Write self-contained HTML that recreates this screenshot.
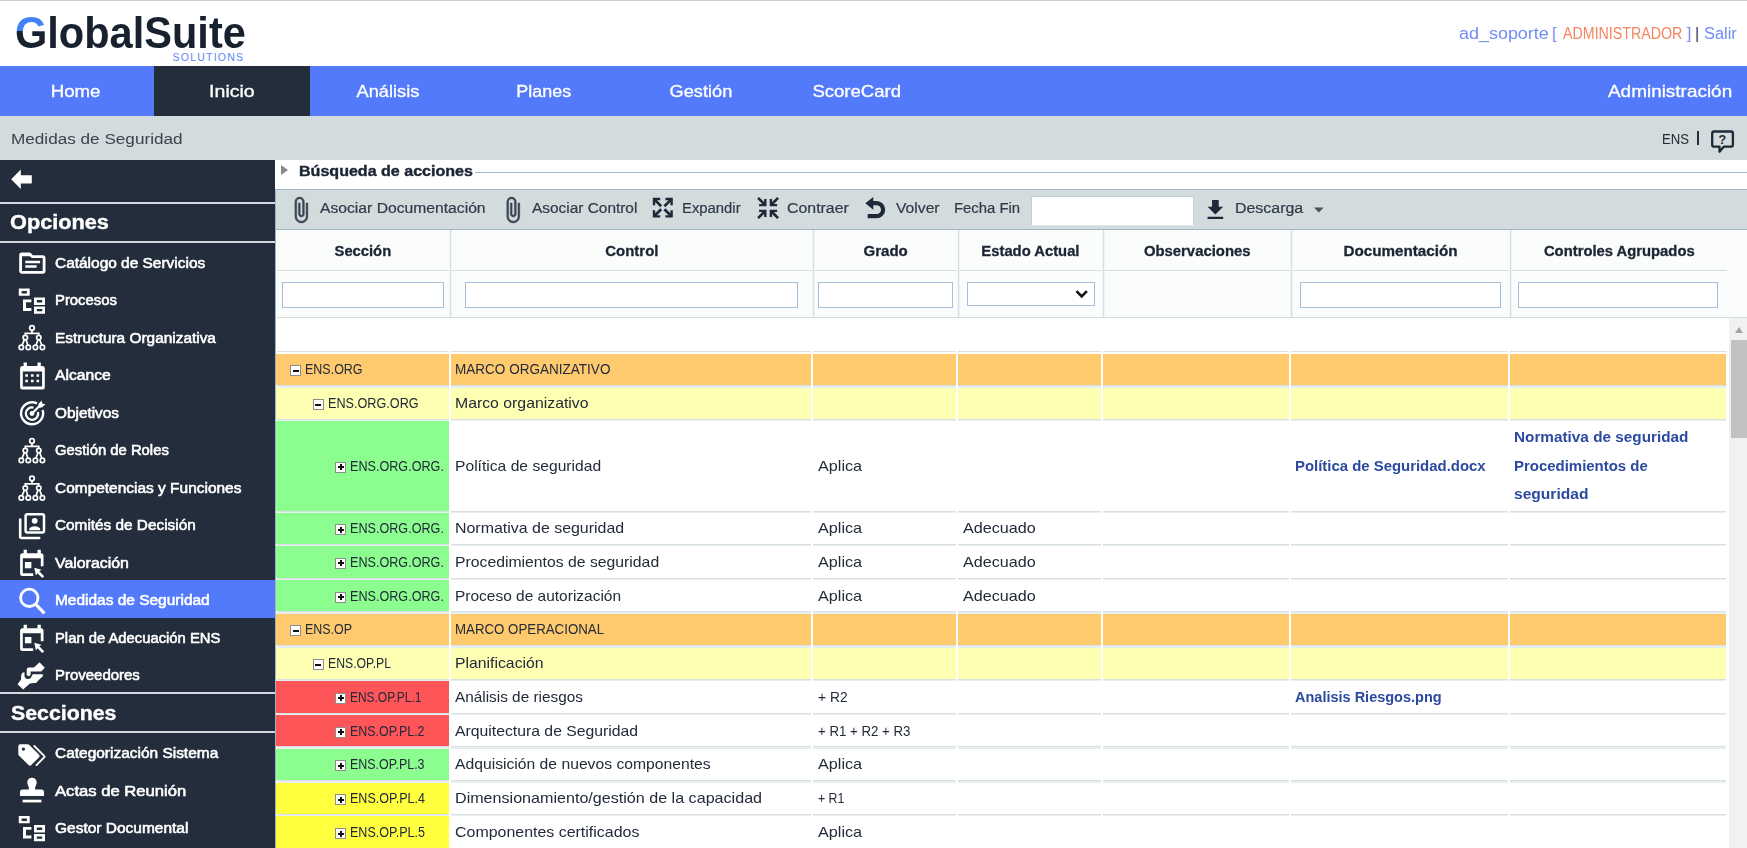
<!DOCTYPE html>
<html lang="es"><head>
<meta charset="utf-8">
<title>GlobalSuite - Medidas de Seguridad</title>
<style>
*{box-sizing:border-box;margin:0;padding:0}
html,body{width:1747px;height:848px;overflow:hidden;background:#fff}
body{position:relative;font-family:"Liberation Sans",sans-serif;color:#232b3a;font-size:14px}
.abs{position:absolute}
.t{position:absolute;white-space:nowrap;line-height:1}
#topline{left:0;top:0;width:1747px;height:1px;background:#cfcfcf}
#logo{left:14.5px;top:12px;font-size:43.5px;font-weight:bold;color:#18222f}
#logo .g{background:linear-gradient(180deg,#3f83f7 0,#3f83f7 46%,#18222f 46%);-webkit-background-clip:text;background-clip:text;color:transparent}
#sol{left:172.5px;top:51.5px;font-size:10.5px;color:#5b86f5}
.u{top:26px;font-size:15.800px;color:#708cf5}
.u.adm{color:#f3845f}
.u.bar{color:#3a3560}
#nav{left:0;top:66px;width:1747px;height:50px;background:#537afa}
#nav .tab{position:absolute;top:0;height:50px;width:156px;color:#fff;font-size:16.2px;text-align:center;line-height:51px;white-space:nowrap;-webkit-text-stroke:0.3px #fff}
#nav .act{background:#232d3b}
#crumb{left:0;top:116px;width:1747px;height:44px;background:#d3dcdd}
#side{left:0;top:160px;width:275px;height:688px;background:#232d3b;color:#fff}
#side .ln{position:absolute;left:0;width:275px;height:2px;background:#d5d8dc}
#side .h{position:absolute;left:10px;font-size:20px;font-weight:bold;line-height:1;white-space:nowrap;-webkit-text-stroke:0.4px #fff}
#side .it{position:absolute;left:0;width:275px;height:37px}
#side .it .tx{position:absolute;left:54.700px;top:11.800px;font-size:14px;line-height:1;white-space:nowrap;-webkit-text-stroke:0.55px #fff}
#side .it svg{position:absolute;left:18px;top:5px;width:28px;height:28px}
#side .sel{background:#537afa}
#side .sel .tx{top:12.800px}
#main{left:275px;top:160px;width:1472px;height:688px;background:#fff;overflow:hidden}

#main .tri{position:absolute;left:6px;top:5px;width:0;height:0;border-left:7px solid #8a8a8a;border-top:5px solid transparent;border-bottom:5px solid transparent}
#main .ttl{left:24px;top:3.500px;font-size:14.600px;font-weight:bold;color:#1c2534;-webkit-text-stroke:0.4px #1c2534}
#main .tln{left:200px;top:12px;width:1272px;height:1px;background:#a3b9d1}
#tb{left:0;top:29px;width:1472px;height:41px;background:#d3dcdd;border-top:1px solid #9cb3cc;border-bottom:1px solid #9cb3cc;border-left:1px solid #a9bed4}
#tb .lb{position:absolute;top:10.800px;font-size:14px;line-height:1;color:#303a48;white-space:nowrap;-webkit-text-stroke:0.2px #303a48}
#tb svg{position:absolute;overflow:visible}
#tb .inp{position:absolute;left:755px;top:6px;width:163px;height:30px;background:#fff;border:1px solid #c3d0dc;border-bottom-color:#dfe6ea}
#hd{left:2px;top:70px;width:1470px;height:88px;background:#fbfcfc}
#hd .hl{position:absolute;left:0;height:1px;background:#d5dddd}
#hd .vl{position:absolute;top:0;width:1px;height:87px;background:#d7dfdf;box-shadow:1px 0 0 #f1f4f4,-1px 0 0 #f4f6f6}
#hd .th{position:absolute;top:14px;font-size:14px;-webkit-text-stroke:0.3px #1c2534;font-weight:bold;line-height:1;color:#1c2534;white-space:nowrap;text-align:center}
#hd .fi{position:absolute;top:52px;height:26px;background:#fff;border:1px solid #a6bddb}
#hd .fi.se{height:24px}
.row{position:absolute;left:2px;width:1449px}
.row .c{position:absolute;top:0;height:100%;overflow:hidden}
.row::after{content:"";position:absolute;left:0;right:0;top:100%;height:2.5px;background:linear-gradient(#d8e0e2 0,#d8e0e2 1px,#e9eef0 1px)}
.c1{left:-1px;width:173px}.c2{left:174px;width:360px}.c3{left:536px;width:143px}.c4{left:681px;width:143px}.c5{left:826px;width:186px}.c6{left:1014px;width:217px}.c7{left:1233px;width:216px}
.org .c{background:#ffc96e}.sub .c{background:#ffffb4}
.w .c{background:#fff}
.w .c2,.w .c3,.w .c4,.w .c5,.w .c6{border-right:0}
.cg{background:#8cfd8f !important}.cr{background:#fd5558 !important}.cy{background:#ffff3e !important}
.ct{position:absolute;left:3.8px;top:50%;margin-top:-8.100px;font-size:14.2px;line-height:16px;white-space:nowrap;color:#232b3a}
.lk{font-weight:bold;color:#2b4aa0 !important}
.l3{position:absolute;left:3.8px;font-size:14.5px;line-height:16px;white-space:nowrap}
.bx{position:absolute;top:50%;margin-top:-4.100px;width:11px;height:11px;background:#fff;border:1px solid #8e8e8e}
.bx::before{content:"";position:absolute;left:1.5px;top:3.5px;width:6px;height:2px;background:#111}
.bx.p::after{content:"";position:absolute;left:3.5px;top:1.5px;width:2px;height:6px;background:#111}
#sb{left:1454px;top:158px;width:18px;height:530px;background:#f1f1f1}
#sb .th{position:absolute;left:2px;top:22px;width:16px;height:98px;background:#c1c1c1}
#sb .up{position:absolute;left:5.5px;top:9px;width:0;height:0;border-bottom:6px solid #a3a3a3;border-left:4.5px solid transparent;border-right:4.5px solid transparent}
.c3 .ct,.c4 .ct{left:5.3px}
.vg{top:158px;width:2px;height:530px;background:#fff;z-index:3}
</style>
</head>
<body>
<div class="abs" id="topline"></div>
<div class="t" id="logo" style="transform: scaleX(0.955); transform-origin: 0px 50%;"><span class="g">G</span>lobalSuite</div>
<div class="t" id="sol" style="letter-spacing: 1.23px;">SOLUTIONS</div>
<div class="t u" style="left: 1458.8px; transform: scaleX(1.136); transform-origin: 0px 50%;">ad_soporte</div>
<div class="t u" style="left:1552px">[</div>
<div class="t u adm" style="left: 1562.5px; transform: scaleX(0.901); transform-origin: 0px 50%;">ADMINISTRADOR</div>
<div class="t u" style="left:1686.8px">]</div>
<div class="t u bar" style="left:1695px">|</div>
<div class="t u" style="left: 1704px; transform: scaleX(1.038); transform-origin: 0px 50%;">Salir</div>
<div class="abs" id="nav">
 <div class="tab" style="left:-2px"><span style="display: inline-block; transform: scaleX(1.153); transform-origin: 50% 50%;">Home</span></div>
 <div class="tab act" style="left:154px;width:156px"><span style="display: inline-block; transform: scaleX(1.206); transform-origin: 50% 50%;">Inicio</span></div>
 <div class="tab" style="left:310px"><span style="display: inline-block; transform: scaleX(1.126); transform-origin: 50% 50%;">Análisis</span></div>
 <div class="tab" style="left:466px"><span style="display: inline-block; transform: scaleX(1.107); transform-origin: 50% 50%;">Planes</span></div>
 <div class="tab" style="left:623px"><span style="display: inline-block; transform: scaleX(1.126); transform-origin: 50% 50%;">Gestión</span></div>
 <div class="tab" style="left:779px"><span style="display: inline-block; transform: scaleX(1.144); transform-origin: 50% 50%;">ScoreCard</span></div>
 <div class="tab" style="left:1592px"><span style="display: inline-block; transform: scaleX(1.17); transform-origin: 50% 50%;">Administración</span></div>
</div>
<div class="abs" id="crumb">
 <div class="t" style="left: 11px; top: 15px; font-size: 15.5px; color: rgb(58, 67, 80); transform: scaleX(1.106); transform-origin: 0px 50%;">Medidas de Seguridad</div>
 <div class="t" style="left: 1661.7px; top: 15px; font-size: 15.5px; transform: scaleX(0.85); transform-origin: 0px 50%;">ENS</div>
 <div class="abs" style="left:1697px;top:15px;width:2px;height:14px;background:#232d3b"></div>
<svg class="abs" style="left:1708px;top:11px;width:30px;height:32px" viewBox="1708 127 30 32" fill="none"><path stroke="#1e2838" stroke-width="2.300" stroke-linejoin="round" d="M1714.200 131.500h16.700a2 2 0 0 1 2 2v11.200a2 2 0 0 1-2 2h-7.200l-4.200 5v-5h-5.300a2 2 0 0 1-2-2v-11.200a2 2 0 0 1 2-2z"></path></svg>
 <div class="t" style="left:1718.500px;top:17.500px;font-size:12.500px;font-weight:bold;color:#1e2838">?</div>
</div>
<div class="abs" id="side">
 <div class="ln" style="top:42px"></div>
 <div class="h" style="top: 52px; transform: scaleX(1.085); transform-origin: 0px 50%;">Opciones</div>
 <div class="ln" style="top:81px"></div>
 <div class="it" style="top:84px"><span class="tx" style="transform: scaleX(1.103); transform-origin: 0px 50%;">Catálogo de Servicios</span></div>
 <div class="it" style="top:121px"><span class="tx" style="transform: scaleX(1.061); transform-origin: 0px 50%;">Procesos</span></div>
 <div class="it" style="top:159px"><span class="tx" style="transform: scaleX(1.1); transform-origin: 0px 50%;">Estructura Organizativa</span></div>
 <div class="it" style="top:196px"><span class="tx" style="transform: scaleX(1.118); transform-origin: 0px 50%;">Alcance</span></div>
 <div class="it" style="top:234px"><span class="tx" style="transform: scaleX(1.097); transform-origin: 0px 50%;">Objetivos</span></div>
 <div class="it" style="top:271px"><span class="tx" style="transform: scaleX(1.06); transform-origin: 0px 50%;">Gestión de Roles</span></div>
 <div class="it" style="top:309px"><span class="tx" style="transform: scaleX(1.104); transform-origin: 0px 50%;">Competencias y Funciones</span></div>
 <div class="it" style="top:346px"><span class="tx" style="transform: scaleX(1.096); transform-origin: 0px 50%;">Comités de Decisión</span></div>
 <div class="it" style="top:384px"><span class="tx" style="transform: scaleX(1.135); transform-origin: 0px 50%;">Valoración</span></div>
 <div class="it sel" style="top:420px;height:38px"><span class="tx" style="transform: scaleX(1.104); transform-origin: 0px 50%;">Medidas de Seguridad</span></div>
 <div class="it" style="top:459px"><span class="tx" style="transform: scaleX(1.057); transform-origin: 0px 50%;">Plan de Adecuación ENS</span></div>
 <div class="it" style="top:496px"><span class="tx" style="transform: scaleX(1.069); transform-origin: 0px 50%;">Proveedores</span></div>
 <div class="ln" style="top:532px"></div>
 <div class="h" style="top: 543px; left: 10.8px; transform: scaleX(1.065); transform-origin: 0px 50%;">Secciones</div>
 <div class="ln" style="top:571px"></div>
 <div class="it" style="top:574px"><span class="tx" style="transform: scaleX(1.104); transform-origin: 0px 50%;">Categorización Sistema</span></div>
 <div class="it" style="top:612px"><span class="tx" style="transform: scaleX(1.188); transform-origin: 0px 50%;">Actas de Reunión</span></div>
 <div class="it" style="top:649px"><span class="tx" style="transform: scaleX(1.106); transform-origin: 0px 50%;">Gestor Documental</span></div>
<svg class="abs" id="sico" style="left:0;top:0;width:275px;height:688px" viewBox="0 160 275 688" fill="none" stroke="none">
<defs>
 <g id="i-tree" fill="#fff">
  <path fill-rule="evenodd" d="M18.8 288.5h10.9v7.3H18.8zM21.6 291h5.3v2.4h-5.3z"></path>
  <path fill-rule="evenodd" d="M34 297.5h11v7.4H34zM36.8 300h5.4v2.4h-5.4z"></path>
  <path fill-rule="evenodd" d="M34 306.5h11v7.2H34zM36.8 309h5.4v2.2h-5.4z"></path>
  <path d="M23 299.4h8.4v2.8h-5.4v5.9h5.4v3H23z"></path>
 </g>
 <g id="i-org" stroke="#fff" stroke-width="1.7" fill="none">
  <circle cx="32" cy="328" r="2.3"></circle>
  <circle cx="25.3" cy="337.6" r="2.2"></circle><circle cx="38.8" cy="337.6" r="2.2"></circle>
  <circle cx="21.3" cy="347.4" r="2.2"></circle><circle cx="28.3" cy="347.4" r="2.2"></circle><circle cx="35.4" cy="347.4" r="2.2"></circle><circle cx="42.4" cy="347.4" r="2.2"></circle>
  <path d="M32 330.3v3M25.3 335.4v-2.1h13.5v2.1M24.4 339.7l-2.4 5.6M26.2 339.7l1.6 5.6M37.9 339.7l-1.9 5.6M39.7 339.7l2.1 5.6"></path>
 </g>
 <g id="i-calcur" fill="#fff">
  <path d="M23.6 549.7h3.3v4h-3.3zM37.5 549.7h3.3v4h-3.3z"></path>
  <path d="M22.6 553.2h18.4a2.5 2.5 0 0 1 2.5 2.5v10.6h-2.7v-8H22.8v15h10.4v2.7H22.6a2.5 2.5 0 0 1-2.5-2.5v-17.8a2.5 2.5 0 0 1 2.5-2.5z"></path>
  <path d="M24.9 562h6.5v6.3h-6.5z"></path>
  <path d="M34.3 567.8l7.2 1.9-2.2 1.6 4.9 4.9-1.9 1.9-4.9-4.9-1.5 2.3z"></path>
 </g>
</defs>
<!-- back arrow -->
<path fill="#fff" d="M11.2 179.3l9.6-9.7v5.6h11v8.2h-11v5.6z"></path>
<!-- folder -->
<path stroke="#fff" stroke-width="2.8" stroke-linejoin="round" d="M20.6 255.2a1.2 1.2 0 0 1 1.2-1.2h8l2.4 2.6h10.6a1.3 1.3 0 0 1 1.3 1.3v13.1a1.3 1.3 0 0 1-1.3 1.3H21.9a1.3 1.3 0 0 1-1.3-1.3z"></path>
<path fill="#fff" d="M20 253.4h10.6l2 2.8H20z"></path>
<path stroke="#fff" stroke-width="2.3" d="M25.3 262h14.8M25.3 266.500h11.300"></path>
<!-- procesos -->
<use href="#i-tree"></use>
<!-- estructura -->
<use href="#i-org"></use>
<!-- alcance: calendar -->
<g fill="#fff">
 <path d="M23.6 362.5h3.3v4.4h-3.3zM37.5 362.5h3.3v4.4h-3.3z"></path>
 <path fill-rule="evenodd" d="M22.6 366h19.7a2.5 2.5 0 0 1 2.5 2.5v18.4a2.5 2.5 0 0 1-2.5 2.5H22.6a2.5 2.5 0 0 1-2.5-2.5v-18.4a2.5 2.5 0 0 1 2.5-2.5zM22.8 371.4v15.2h19.3v-15.2z"></path>
 <path d="M25.3 374.2h2.6v2.6h-2.6zM31 374.2h2.6v2.6H31zM36.5 374.2h2.6v2.6h-2.6zM25.3 379.7h2.6v2.6h-2.6zM31 379.7h2.6v2.6H31zM36.5 379.7h2.6v2.6h-2.6z"></path>
</g>
<!-- objetivos: target -->
<g stroke="#fff" fill="none">
 <path stroke-width="2.4" d="M37 403.4A11 11 0 1 0 42.6 410"></path>
 <path stroke-width="2.3" d="M33.5 407.6A6.2 6.2 0 1 0 38 412"></path>
 <circle cx="32" cy="413.5" r="2.4" fill="#fff" stroke="none"></circle>
 <path stroke-width="2.2" d="M32 413.5l8.5-8.5"></path>
 <path fill="#fff" stroke="none" d="M38.3 404l3.4-3.6.6 3.2 3.2.6-3.6 3.4-3 .1z"></path>
</g>
<!-- gestion de roles -->
<use href="#i-org" y="113"></use>
<!-- competencias -->
<use href="#i-org" y="150.5"></use>
<!-- comites -->
<g>
 <rect x="25.6" y="514.2" width="18.4" height="18.4" rx="1.8" stroke="#fff" stroke-width="2.5"></rect>
 <circle cx="34.7" cy="520.8" r="2.9" fill="#fff"></circle>
 <path fill="#fff" d="M29.2 530.3v-1c0-2 3.6-3 5.5-3s5.5 1 5.5 3v1z"></path>
 <path stroke="#fff" stroke-width="2.6" stroke-linecap="round" stroke-linejoin="round" d="M20.2 519.5v17a1.5 1.5 0 0 0 1.5 1.5h17.5"></path>
</g>
<!-- valoracion -->
<use href="#i-calcur"></use>
<!-- medidas: magnifier -->
<circle cx="29.3" cy="597.8" r="8.7" stroke="#fff" stroke-width="2.8"></circle>
<path stroke="#fff" stroke-width="3.2" d="M35.6 604.2l8.8 9.2"></path>
<!-- plan -->
<use href="#i-calcur" y="75"></use>
<!-- proveedores: handshake -->
<g fill="#fff">
 <path d="M39.500 662.200L44.800 667.800L41.200 671.600H30.600V675Q28.700 677.300 26.700 675V669.500Q26.800 667.500 28.800 667.500H34Z"></path>
 <path d="M17.600 684.300L21 679.600L21.200 675Q21.600 672.700 24.400 672L24.600 676.700Q26 679.600 28.600 679Q31 678.500 31.500 676.500L32.700 674.300H42.900V676.300L40.300 678.400L37.800 680.900L36.500 682.800L29.900 683.500L23.100 689.600Z"></path>
</g>
<!-- categorizacion: tags -->
<g>
 <path fill="#fff" fill-rule="evenodd" d="M18.300 746.200a2 2 0 0 1 2-2h7.400a2 2 0 0 1 1.400.6l9.800 9.800a2 2 0 0 1 0 2.800l-7.600 7.600a2 2 0 0 1-2.800 0l-9.600-9.600a2 2 0 0 1-.6-1.400zM23.400 747.400a1.700 1.700 0 1 0 0 3.400 1.700 1.700 0 0 0 0-3.400z"></path>
 <path stroke="#fff" stroke-width="1.900" stroke-linecap="round" stroke-linejoin="round" d="M34.300 746l9.600 9.600a1.500 1.500 0 0 1 0 2.100l-7.400 7.400"></path>
</g>
<!-- actas: stamp -->
<g fill="#fff">
 <path d="M32 777.800c2.700 0 4.700 2 4.700 4.600 0 1.500-.6 2.700-1.200 4-.5 1-.5 2.200-.1 3.200h6.100c1.500 0 2.500 1 2.500 2.500v4H20v-4c0-1.500 1-2.500 2.500-2.500h6.100c.4-1 .4-2.200-.1-3.200-.6-1.300-1.200-2.500-1.200-4 0-2.600 2-4.600 4.700-4.600z"></path>
 <path d="M22.600 799.700h18.800v2.700H22.600z"></path>
</g>
<!-- gestor documental -->
<use href="#i-tree" y="527.5"></use>
</svg>
</div>
<div class="abs" id="main">
 <div class="tri"></div>
 <div class="t ttl" style="transform: scaleX(1.1); transform-origin: 0px 50%;">Búsqueda de acciones</div>
 <div class="abs tln"></div>
 <div class="abs" id="tb">
  <span class="lb" style="left: 43.5px; transform: scaleX(1.12); transform-origin: 0px 50%;">Asociar Documentación</span>
  <span class="lb" style="left: 255.5px; transform: scaleX(1.101); transform-origin: 0px 50%;">Asociar Control</span>
  <span class="lb" style="left: 406.4px; transform: scaleX(1.06); transform-origin: 0px 50%;">Expandir</span>
  <span class="lb" style="left: 511px; transform: scaleX(1.135); transform-origin: 0px 50%;">Contraer</span>
  <span class="lb" style="left: 619.8px; transform: scaleX(1.12); transform-origin: 0px 50%;">Volver</span>
  <span class="lb" style="left: 678.4px; transform: scaleX(1.062); transform-origin: 0px 50%;">Fecha Fin</span>
  <div class="inp"></div>
  <span class="lb" style="left: 958.6px; transform: scaleX(1.138); transform-origin: 0px 50%;">Descarga</span>
 </div>
 <div class="abs" id="hd">
  <div class="hl" style="top:40px;width:1450px"></div>
  <div class="hl" style="top:87px;width:1470px"></div>
  <div class="vl" style="left:173px"></div><div class="vl" style="left:536px"></div><div class="vl" style="left:681px"></div><div class="vl" style="left:826px"></div><div class="vl" style="left:1014px"></div><div class="vl" style="left:1233px"></div>
  <div class="th" style="left:0;width:172px"><span style="display: inline-block; transform: scaleX(1.054); transform-origin: 50% 50%;">Sección</span></div>
  <div class="th" style="left:174px;width:361px"><span style="display: inline-block; transform: scaleX(1.067); transform-origin: 50% 50%;">Control</span></div>
  <div class="th" style="left:537px;width:143px"><span style="display: inline-block; transform: scaleX(1.074); transform-origin: 50% 50%;">Grado</span></div>
  <div class="th" style="left:682px;width:143px"><span style="display: inline-block; transform: scaleX(1.057); transform-origin: 50% 50%;">Estado Actual</span></div>
  <div class="th" style="left:827px;width:186px"><span style="display: inline-block; transform: scaleX(1.062); transform-origin: 50% 50%;">Observaciones</span></div>
  <div class="th" style="left:1015px;width:217px"><span style="display: inline-block; transform: scaleX(1.088); transform-origin: 50% 50%;">Documentación</span></div>
  <div class="th" style="left:1234px;width:216px"><span style="display: inline-block; transform: scaleX(1.057); transform-origin: 50% 50%;">Controles Agrupados</span></div>
  <div class="fi" style="left:5px;width:162px"></div>
  <div class="fi" style="left:188px;width:333px"></div>
  <div class="fi" style="left:541px;width:135px"></div>
  <div class="fi se" style="left:689.5px;width:128px"></div>
  <div class="fi" style="left:1022.5px;width:201px"></div>
  <div class="fi" style="left:1241px;width:200px"></div>
 </div>
<div class="row org" style="top:193.75px;height:31.25px">
 <div class="c c1"><i class="bx m" style="left:14px"></i><span class="ct" style="left: 29.2px; transform: scaleX(0.88); transform-origin: 0px 50%;">ENS.ORG</span></div>
 <div class="c c2"><span class="ct" style="transform: scaleX(0.954); transform-origin: 0px 50%;">MARCO ORGANIZATIVO</span></div>
 <div class="c c3"></div>
 <div class="c c4"></div>
 <div class="c c5"></div>
 <div class="c c6"></div>
 <div class="c c7"></div>
</div>
<div class="row sub" style="top:227.5px;height:31.25px">
 <div class="c c1"><i class="bx m" style="left:36.5px"></i><span class="ct" style="left: 51.7px; transform: scaleX(0.891); transform-origin: 0px 50%;">ENS.ORG.ORG</span></div>
 <div class="c c2"><span class="ct" style="transform: scaleX(1.114); transform-origin: 0px 50%;">Marco organizativo</span></div>
 <div class="c c3"></div>
 <div class="c c4"></div>
 <div class="c c5"></div>
 <div class="c c6"></div>
 <div class="c c7"></div>
</div>
<div class="row w" style="top:261.25px;height:89.25px">
 <div class="c c1 cg"><i class="bx p" style="left:59px"></i><span class="ct" style="left: 74.2px; transform: scaleX(0.889); transform-origin: 0px 50%;">ENS.ORG.ORG.</span></div>
 <div class="c c2"><span class="ct" style="transform: scaleX(1.103); transform-origin: 0px 50%;">Política de seguridad</span></div>
 <div class="c c3"><span class="ct" style="transform: scaleX(1.141); transform-origin: 0px 50%;">Aplica</span></div>
 <div class="c c4"></div>
 <div class="c c5"></div>
 <div class="c c6"><a class="ct lk" style="transform: scaleX(1.051); transform-origin: 0px 50%;">Política de Seguridad.docx</a></div>
 <div class="c c7"><a class="lk l3" style="top: 7.5px; transform: scaleX(1.056); transform-origin: 0px 50%;">Normativa de seguridad</a><a class="lk l3" style="top: 36.3px; transform: scaleX(1.031); transform-origin: 0px 50%;">Procedimientos de</a><a class="lk l3" style="top: 65.1px; transform: scaleX(1.074); transform-origin: 0px 50%;">seguridad</a></div>
</div>
<div class="row w" style="top:352.5px;height:31.25px">
 <div class="c c1 cg"><i class="bx p" style="left:59px"></i><span class="ct" style="left: 74.2px; transform: scaleX(0.889); transform-origin: 0px 50%;">ENS.ORG.ORG.</span></div>
 <div class="c c2"><span class="ct" style="transform: scaleX(1.123); transform-origin: 0px 50%;">Normativa de seguridad</span></div>
 <div class="c c3"><span class="ct" style="transform: scaleX(1.141); transform-origin: 0px 50%;">Aplica</span></div>
 <div class="c c4"><span class="ct" style="transform: scaleX(1.139); transform-origin: 0px 50%;">Adecuado</span></div>
 <div class="c c5"></div>
 <div class="c c6"></div>
 <div class="c c7"></div>
</div>
<div class="row w" style="top:386.25px;height:31.25px">
 <div class="c c1 cg"><i class="bx p" style="left:59px"></i><span class="ct" style="left: 74.2px; transform: scaleX(0.889); transform-origin: 0px 50%;">ENS.ORG.ORG.</span></div>
 <div class="c c2"><span class="ct" style="transform: scaleX(1.111); transform-origin: 0px 50%;">Procedimientos de seguridad</span></div>
 <div class="c c3"><span class="ct" style="transform: scaleX(1.141); transform-origin: 0px 50%;">Aplica</span></div>
 <div class="c c4"><span class="ct" style="transform: scaleX(1.139); transform-origin: 0px 50%;">Adecuado</span></div>
 <div class="c c5"></div>
 <div class="c c6"></div>
 <div class="c c7"></div>
</div>
<div class="row w" style="top:420px;height:31.25px">
 <div class="c c1 cg"><i class="bx p" style="left:59px"></i><span class="ct" style="left: 74.2px; transform: scaleX(0.889); transform-origin: 0px 50%;">ENS.ORG.ORG.</span></div>
 <div class="c c2"><span class="ct" style="transform: scaleX(1.091); transform-origin: 0px 50%;">Proceso de autorización</span></div>
 <div class="c c3"><span class="ct" style="transform: scaleX(1.141); transform-origin: 0px 50%;">Aplica</span></div>
 <div class="c c4"><span class="ct" style="transform: scaleX(1.139); transform-origin: 0px 50%;">Adecuado</span></div>
 <div class="c c5"></div>
 <div class="c c6"></div>
 <div class="c c7"></div>
</div>
<div class="row org" style="top:453.75px;height:31.25px">
 <div class="c c1"><i class="bx m" style="left:14px"></i><span class="ct" style="left: 29.2px; transform: scaleX(0.878); transform-origin: 0px 50%;">ENS.OP</span></div>
 <div class="c c2"><span class="ct" style="transform: scaleX(0.936); transform-origin: 0px 50%;">MARCO OPERACIONAL</span></div>
 <div class="c c3"></div>
 <div class="c c4"></div>
 <div class="c c5"></div>
 <div class="c c6"></div>
 <div class="c c7"></div>
</div>
<div class="row sub" style="top:487.5px;height:31.25px">
 <div class="c c1"><i class="bx m" style="left:36.5px"></i><span class="ct" style="left: 51.7px; transform: scaleX(0.863); transform-origin: 0px 50%;">ENS.OP.PL</span></div>
 <div class="c c2"><span class="ct" style="transform: scaleX(1.112); transform-origin: 0px 50%;">Planificación</span></div>
 <div class="c c3"></div>
 <div class="c c4"></div>
 <div class="c c5"></div>
 <div class="c c6"></div>
 <div class="c c7"></div>
</div>
<div class="row w" style="top:521.25px;height:31.25px">
 <div class="c c1 cr"><i class="bx p" style="left:59px"></i><span class="ct" style="left: 74.2px; transform: scaleX(0.841); transform-origin: 0px 50%;">ENS.OP.PL.1</span></div>
 <div class="c c2"><span class="ct" style="transform: scaleX(1.081); transform-origin: 0px 50%;">Análisis de riesgos</span></div>
 <div class="c c3"><span class="ct" style="transform: scaleX(0.974); transform-origin: 0px 50%;">+ R2</span></div>
 <div class="c c4"></div>
 <div class="c c5"></div>
 <div class="c c6"><a class="ct lk" style="transform: scaleX(1.022); transform-origin: 0px 50%;">Analisis Riesgos.png</a></div>
 <div class="c c7"></div>
</div>
<div class="row w" style="top:555px;height:31.25px">
 <div class="c c1 cr"><i class="bx p" style="left:59px"></i><span class="ct" style="left: 74.2px; transform: scaleX(0.878); transform-origin: 0px 50%;">ENS.OP.PL.2</span></div>
 <div class="c c2"><span class="ct" style="transform: scaleX(1.111); transform-origin: 0px 50%;">Arquitectura de Seguridad</span></div>
 <div class="c c3"><span class="ct" style="transform: scaleX(0.933); transform-origin: 0px 50%;">+ R1 + R2 + R3</span></div>
 <div class="c c4"></div>
 <div class="c c5"></div>
 <div class="c c6"></div>
 <div class="c c7"></div>
</div>
<div class="row w" style="top:588.75px;height:31.25px">
 <div class="c c1 cg"><i class="bx p" style="left:59px"></i><span class="ct" style="left: 74.2px; transform: scaleX(0.878); transform-origin: 0px 50%;">ENS.OP.PL.3</span></div>
 <div class="c c2"><span class="ct" style="transform: scaleX(1.106); transform-origin: 0px 50%;">Adquisición de nuevos componentes</span></div>
 <div class="c c3"><span class="ct" style="transform: scaleX(1.141); transform-origin: 0px 50%;">Aplica</span></div>
 <div class="c c4"></div>
 <div class="c c5"></div>
 <div class="c c6"></div>
 <div class="c c7"></div>
</div>
<div class="row w" style="top:622.5px;height:31.25px">
 <div class="c c1 cy"><i class="bx p" style="left:59px"></i><span class="ct" style="left: 74.2px; transform: scaleX(0.884); transform-origin: 0px 50%;">ENS.OP.PL.4</span></div>
 <div class="c c2"><span class="ct" style="transform: scaleX(1.135); transform-origin: 0px 50%;">Dimensionamiento/gestión de la capacidad</span></div>
 <div class="c c3"><span class="ct" style="transform: scaleX(0.866); transform-origin: 0px 50%;">+ R1</span></div>
 <div class="c c4"></div>
 <div class="c c5"></div>
 <div class="c c6"></div>
 <div class="c c7"></div>
</div>
<div class="row w" style="top:656.25px;height:31.75px">
 <div class="c c1 cy"><i class="bx p" style="left:59px"></i><span class="ct" style="left: 74.2px; transform: scaleX(0.884); transform-origin: 0px 50%;">ENS.OP.PL.5</span></div>
 <div class="c c2"><span class="ct" style="transform: scaleX(1.124); transform-origin: 0px 50%;">Componentes certificados</span></div>
 <div class="c c3"><span class="ct" style="transform: scaleX(1.141); transform-origin: 0px 50%;">Aplica</span></div>
 <div class="c c4"></div>
 <div class="c c5"></div>
 <div class="c c6"></div>
 <div class="c c7"></div>
</div>
<svg class="abs" id="mico" style="left:0;top:0;width:1472px;height:160px" viewBox="275 160 1472 160" fill="none">
<defs><path id="clip" d="M16.5 6v11.5c0 2.21-1.790 4-4 4s-4-1.790-4-4V5c0-1.380 1.120-2.500 2.500-2.500s2.500 1.120 2.500 2.500v10.500c0 .55-.45 1-1 1s-1-.45-1-1V6H10v9.500c0 1.380 1.120 2.500 2.500 2.500s2.500-1.120 2.500-2.500V5c0-2.210-1.790-4-4-4S7 2.790 7 5v12.500c0 3.040 2.460 5.500 5.500 5.500s5.500-2.460 5.500-5.500V6h-1.500z"></path><g id="arw" fill="none" stroke="#1e2838"><path stroke-width="2.4" stroke-linejoin="miter" d="M7.4 1.2H1.2V7.4"></path><path stroke-width="2.7" d="M1.8 1.8L8.4 8.4"></path></g></defs>
<g fill="#3a4452" stroke="#3a4452" stroke-width="0.4">
 <use href="#clip" transform="translate(286.700 195.900) scale(1.175)"></use>
 <use href="#clip" transform="translate(498.600 195.900) scale(1.175)"></use>
</g>
<g fill="#1e2838">
 <path d="M865.3 203.3L873.3 197.1V201.100H876.600A8.600 8.600 0 0 1 876.600 218.300H867.700V214.100H876.600A4.400 4.400 0 0 0 876.600 205.300H873.300V209.800Z"></path>
 <path transform="translate(1202 196.700) scale(1.115)" d="M19 9h-4V3H9v6H5l7 7 7-7zM5 18v2h14v-2H5z"></path>
</g>
<use href="#arw" transform="translate(652.8 197.8)"></use><use href="#arw" transform="translate(672.8 197.8) scale(-1 1)"></use><use href="#arw" transform="translate(652.8 217.6) scale(1 -1)"></use><use href="#arw" transform="translate(672.8 217.6) scale(-1 -1)"></use>
<use href="#arw" transform="translate(766.5 206.3) scale(-1 -1)"></use><use href="#arw" transform="translate(769.7 206.3) scale(1 -1)"></use><use href="#arw" transform="translate(766.5 209.7) scale(-1 1)"></use><use href="#arw" transform="translate(769.7 209.7)"></use>
<path fill="#4a5360" d="M1314 207.500h9.700l-4.850 5z"></path>
<path stroke="#111" stroke-width="2.600" d="M1076.500 291.200l5.200 5.200 5.200-5.200"></path>
</svg>
 <div class="abs" style="left:0;top:29px;width:1px;height:659px;background:#9db3cb"></div>
 <div class="abs" style="left:2px;top:191px;width:1450px;height:1px;background:#d9e1e4"></div>
 <div class="abs vg" style="left:174px"></div><div class="abs vg" style="left:536px"></div><div class="abs vg" style="left:681px"></div><div class="abs vg" style="left:826px"></div><div class="abs vg" style="left:1014px"></div><div class="abs vg" style="left:1233px"></div>
 <div class="abs" id="sb"><div class="up"></div><div class="th"></div></div>
</div>


</body></html>
